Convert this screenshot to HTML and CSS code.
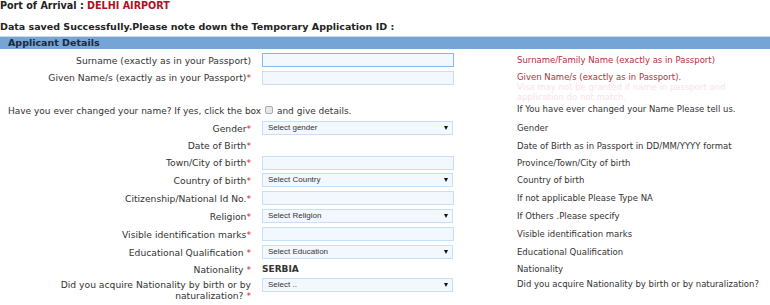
FILE: index.html
```html
<!DOCTYPE html>
<html lang="en">
<head>
  <meta charset="UTF-8" />
  <title>Applicant Details</title>
  <link rel="stylesheet" href="styles.css">
</head>
<body>
  <p class="port">Port of Arrival : <span>DELHI AIRPORT</span></p>
  <p class="saved">Data saved Successfully.Please note down the Temporary Application ID :</p>

  <div class="section-head">Applicant Details</div>

  <div class="form">
    <div class="row">
      <label>Surname (exactly as in your Passport)</label>
      <input type="text" class="field focus" />
      <div class="hint red">Surname/Family Name (exactly as in Passport)</div>
    </div>
    <div class="row given">
      <label>Given Name/s (exactly as in your Passport)<em>*</em></label>
      <input type="text" class="field" />
      <div class="hint red">Given Name/s (exactly as in Passport).<br>
        <span class="faded">Visa may not be granted if name in passport and<br>application do not match.</span></div>
    </div>
    <div class="row wide">
      <div class="changed">Have you ever changed your name? If yes, click the box <span class="box"></span> and give details.</div>
      <div class="hint">If You have ever changed your Name Please tell us.</div>
    </div>
    <div class="row">
      <label>Gender<em>*</em></label>
      <div class="select">Select gender</div>
      <div class="hint">Gender</div>
    </div>
    <div class="row short">
      <label>Date of Birth<em>*</em></label>
      <div></div>
      <div class="hint">Date of Birth as in Passport in DD/MM/YYYY format</div>
    </div>
    <div class="row short">
      <label>Town/City of birth<em>*</em></label>
      <input type="text" class="field" />
      <div class="hint">Province/Town/City of birth</div>
    </div>
    <div class="row">
      <label>Country of birth<em>*</em></label>
      <div class="select">Select Country</div>
      <div class="hint">Country of birth</div>
    </div>
    <div class="row">
      <label>Citizenship/National Id No.<em>*</em></label>
      <input type="text" class="field" />
      <div class="hint">If not applicable Please Type NA</div>
    </div>
    <div class="row">
      <label>Religion<em>*</em></label>
      <div class="select">Select Religion</div>
      <div class="hint">If Others .Please specify</div>
    </div>
    <div class="row">
      <label>Visible identification marks<em>*</em></label>
      <input type="text" class="field" />
      <div class="hint">Visible identification marks</div>
    </div>
    <div class="row">
      <label>Educational Qualification <em>*</em></label>
      <div class="select">Select Education</div>
      <div class="hint">Educational Qualification</div>
    </div>
    <div class="row nat">
      <label>Nationality <em>*</em></label>
      <strong class="value">SERBIA</strong>
      <div class="hint">Nationality</div>
    </div>
    <div class="row acquire">
      <label>Did you acquire Nationality by birth or by<br>naturalization? <em>*</em></label>
      <div class="select">Select ..</div>
      <div class="hint">Did you acquire Nationality by birth or by naturalization?</div>
    </div>
  </div>
</body>
</html>
```

FILE: styles.css
```css
body {
  margin: 0;
  background: #fff;
  color: #333;
  font-family: "DejaVu Sans", Verdana, sans-serif;
  font-size: 9.2px;
}
p {
  margin: 0;
}
.port {
  font-weight: bold;
  font-size: 9.6px;
  line-height: 12px;
  color: #222;
}
.port span {
  color: #b0101e;
}
.saved {
  margin-top: 9px;
  font-weight: bold;
  font-size: 9.5px;
  line-height: 12px;
  color: #222;
}
.section-head {
  margin-top: 3px;
  border-top: 1px solid #c9dcf0;
  background: #74a5d5;
  height: 12px;
  line-height: 12px;
  padding-left: 8px;
  font-weight: bold;
  font-size: 9.5px;
  color: #1a2940;
}
.form {
  margin-top: 2px;
}
.row {
  display: grid;
  grid-template-columns: 251px 244px 1fr;
  column-gap: 11px;
  align-items: center;
  height: 18px;
}
.row.short {
  height: 17px;
}
.row.nat {
  height: 16px;
}
.row label {
  text-align: right;
  line-height: 11px;
}
.row em {
  font-style: normal;
  color: #d8232a;
}
.field {
  box-sizing: border-box;
  width: 192px;
  height: 14px;
  margin: 0;
  padding: 0;
  border: 1px solid #c6e0fb;
  background: #f3f8ff;
}
.field.focus {
  border-color: #86b7ee;
}
.select {
  box-sizing: border-box;
  position: relative;
  width: 191px;
  height: 14px;
  padding-left: 5px;
  border: 1px solid #c6e0fb;
  background: #f3f8ff;
  font-family: "Liberation Sans", Arial, sans-serif;
  font-size: 8px;
  line-height: 12px;
  color: #333;
}
.select::after {
  content: "";
  position: absolute;
  right: 4px;
  top: 4px;
  border-left: 2.5px solid transparent;
  border-right: 2.5px solid transparent;
  border-top: 4px solid #111;
}
.hint {
  font-size: 8.5px;
  color: #333;
}
.hint.red {
  color: #b3303c;
}
.faded {
  color: #f9e3e6;
}
.row.given {
  height: 33px;
  align-items: start;
}
.row.given label {
  padding-top: 3px;
}
.row.given .field {
  margin-top: 2px;
}
.row.given .hint {
  line-height: 10px;
  padding-top: 3px;
}
.row.wide {
  grid-template-columns: 506px 1fr;
  height: 17px;
}
.changed {
  padding-left: 8px;
  padding-top: 1px;
  font-size: 9px;
}
.row.wide .hint {
  margin-top: -4px;
}
.box {
  display: inline-block;
  width: 6px;
  height: 6px;
  border: 1px solid #aaa;
  border-radius: 2px;
  background: #e8e8e8;
  vertical-align: 0;
  margin: 0 1px;
}
.value {
  font-size: 9px;
  color: #333;
}
.row.acquire {
  height: 24px;
  align-items: start;
}
.row.acquire label {
  padding-top: 2px;
}
.row.acquire .select {
  margin-top: 1px;
}
.row.acquire .hint {
  padding-top: 2px;
}
```
